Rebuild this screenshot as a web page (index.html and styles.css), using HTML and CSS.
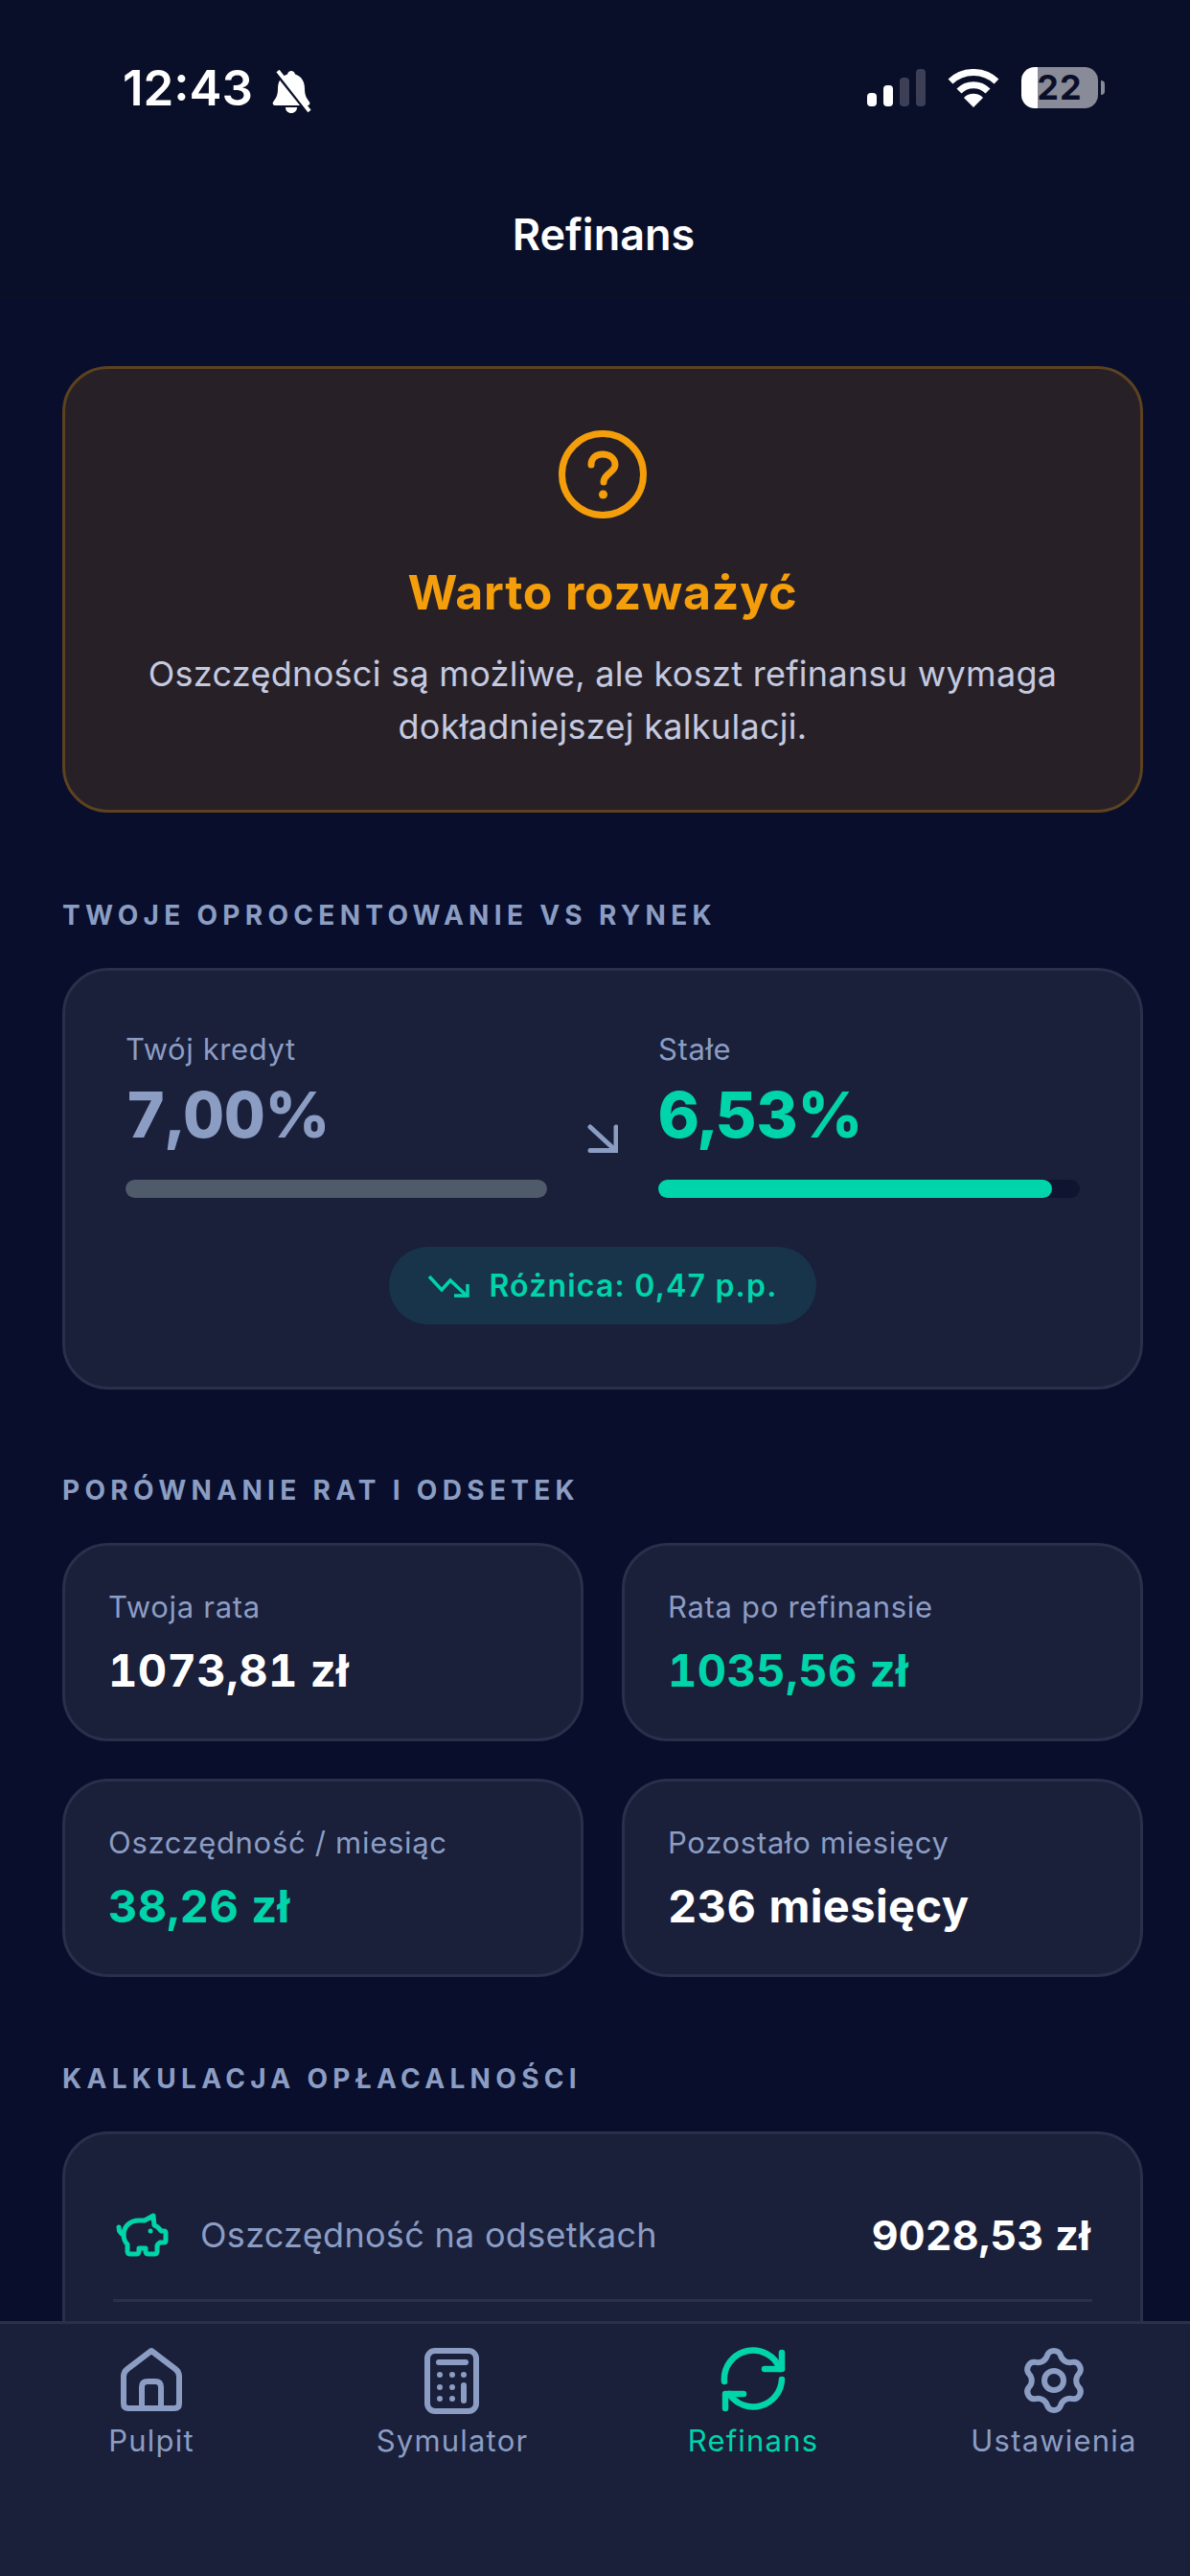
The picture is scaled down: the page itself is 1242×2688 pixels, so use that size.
FILE: index.html
```html
<!DOCTYPE html>
<html lang="pl">
<head>
    <meta charset="UTF-8">
    <meta name="viewport" content="width=device-width, initial-scale=1.0">
    <title>Refinans</title>
    <link rel="stylesheet" href="styles.css">
</head>
<body>
    <div class="app">
        <header class="top">
            <div class="status">
                <div class="status-left">
                    <span class="time">12:43</span>
                    <svg class="bell" width="46" height="46" viewBox="0 0 46 46">
                        <path class="bell-body" d="M23 1c2 0 3.500 1.500 4 3.500 7 2 10 8 10 15 0 7 2 10 5 14 1 1.500 0 3.500-2 3.500H6c-2 0-3-2-2-3.500 3-4 5-7 5-14 0-7 3-13 10-15C19.500 2.500 21 1 23 1zM17 39h12c0 3.500-2.500 6-6 6s-6-2.500-6-6z"/>
                        <path class="bell-gap" d="M5 0l36 45"/>
                        <path class="bell-slash" d="M9 1l33 42"/>
                    </svg>
                </div>
                <div class="status-right">
                    <div class="signal">
                        <span class="sig sig1"></span>
                        <span class="sig sig2"></span>
                        <span class="sig sig3 off"></span>
                        <span class="sig sig4 off"></span>
                    </div>
                    <svg class="wifi" width="54" height="40" viewBox="0 0 54 40">
                        <path d="M3 13A35 35 0 0 1 51 13" fill="none" stroke="#fff" stroke-width="7"/>
                        <path d="M12 23A21 21 0 0 1 42 23" fill="none" stroke="#fff" stroke-width="7"/>
                        <path d="M17 30A14 14 0 0 1 37 30L27 40z" fill="#fff"/>
                    </svg>
                    <div class="battery">22</div>
                </div>
            </div>
            <h1 class="title">Refinans</h1>
        </header>

        <main class="content">
            <section class="card verdict">
                <svg width="92" height="92" viewBox="0 0 92 92" fill="none" stroke="#f59e0b" stroke-width="7" stroke-linecap="round">
                    <circle cx="46" cy="46" r="42.500"/>
                    <path d="M34 36C34 29 39 25 46 25C53 25 59 29 59 36C59 44 47 45 47 54"/>
                    <circle cx="46.500" cy="67" r="4.500" fill="#f59e0b" stroke="none"/>
                </svg>
                <h2 class="verdict-title">Warto rozważyć</h2>
                <p class="verdict-text">Oszczędności są możliwe, ale koszt refinansu wymaga dokładniejszej kalkulacji.</p>
            </section>

            <h3 class="section-label">TWOJE OPROCENTOWANIE VS RYNEK</h3>
            <section class="card rates">
                <div class="rates-row">
                    <div class="rate">
                        <div class="rate-name">Twój kredyt</div>
                        <div class="rate-value">7,00%</div>
                        <div class="bar"><div class="bar-fill grey" style="width: 100%"></div></div>
                    </div>
                    <svg class="rate-arrow" width="32" height="30" viewBox="0 0 32 30" fill="none" stroke="#8b9dc3" stroke-width="5" stroke-linecap="round">
                        <path d="M3 3L29 27"/>
                        <path d="M30 3V27.500H3"/>
                    </svg>
                    <div class="rate">
                        <div class="rate-name">Stałe</div>
                        <div class="rate-value green">6,53%</div>
                        <div class="bar"><div class="bar-fill teal" style="width: 93.300%"></div></div>
                    </div>
                </div>
                <div class="diff">
                    <svg width="44" height="24" viewBox="0 0 44 24" fill="none" stroke="#00d4aa" stroke-width="3.500">
                        <path d="M2 2L15 16L24 6L41 22"/>
                        <path d="M42 10V22H28"/>
                    </svg>
                    <span>Różnica: 0,47 p.p.</span>
                </div>
            </section>

            <h3 class="section-label">PORÓWNANIE RAT I ODSETEK</h3>
            <section class="stats">
                <div class="card stat">
                    <div class="stat-name">Twoja rata</div>
                    <div class="stat-value">1073,81 zł</div>
                </div>
                <div class="card stat">
                    <div class="stat-name">Rata po refinansie</div>
                    <div class="stat-value green">1035,56 zł</div>
                </div>
                <div class="card stat">
                    <div class="stat-name">Oszczędność / miesiąc</div>
                    <div class="stat-value green">38,26 zł</div>
                </div>
                <div class="card stat">
                    <div class="stat-name">Pozostało miesięcy</div>
                    <div class="stat-value">236 miesięcy</div>
                </div>
            </section>

            <h3 class="section-label">KALKULACJA OPŁACALNOŚCI</h3>
            <section class="card calc">
                <div class="calc-row">
                    <svg class="pig" width="60" height="60" viewBox="0 0 60 60" fill="none" stroke="#00d4aa" stroke-width="5" stroke-linejoin="round" stroke-linecap="round">
                        <path d="M42 10L33 15H27C18 15 11 21 11 30C11 35 13 38 15 40V47Q15 50 18 50H24Q27 50 27 47V44H34V47Q34 50 37 50H43Q46 50 46 47V41Q47 39 49 38H53Q55 38 55 36V28Q55 26 53 26H50Q48 22 43 20Z"/>
                        <path d="M11 30Q6 28 6 22"/>
                        <circle cx="39" cy="26" r="2.500" fill="#00d4aa" stroke="none"/>
                    </svg>
                    <span class="calc-name">Oszczędność na odsetkach</span>
                    <span class="calc-value">9028,53 zł</span>
                </div>
            </section>
        </main>

        <nav class="tabs">
            <div class="tab">
                <svg width="72" height="72" viewBox="0 0 72 72" fill="none" stroke="#8b9dc3" stroke-width="6" stroke-linejoin="round" stroke-linecap="round">
                    <path d="M36 6L61 25Q65 28 65 33V61Q65 66 60 66H12Q7 66 7 61V33Q7 28 11 25Z"/>
                    <path d="M26 66V44Q26 38 32 38H40Q46 38 46 44V66"/>
                </svg>
                <span>Pulpit</span>
            </div>
            <div class="tab">
                <svg width="72" height="72" viewBox="0 0 72 72" fill="none" stroke="#8b9dc3" stroke-width="6" stroke-linecap="round">
                    <rect x="10" y="6" width="51" height="63" rx="8"/>
                    <path d="M22 18H50"/>
                    <path d="M48 42V58"/>
                    <g fill="#8b9dc3" stroke="none">
                        <circle cx="23" cy="31" r="3"/>
                        <circle cx="36" cy="31" r="3"/>
                        <circle cx="48" cy="31" r="3"/>
                        <circle cx="23" cy="44" r="3"/>
                        <circle cx="36" cy="44" r="3"/>
                        <circle cx="23" cy="56" r="3"/>
                        <circle cx="36" cy="56" r="3"/>
                    </g>
                </svg>
                <span>Symulator</span>
            </div>
            <div class="tab active">
                <svg width="72" height="72" viewBox="0 0 72 72" fill="none" stroke="#00d4aa" stroke-width="6.500" stroke-linecap="round" stroke-linejoin="round">
                    <path d="M6 38A30 30 0 0 1 64 25"/>
                    <path d="M66 8V25H48"/>
                    <path d="M66 36A30 30 0 0 1 11 51"/>
                    <path d="M7 66V51H26"/>
                </svg>
                <span>Refinans</span>
            </div>
            <div class="tab">
                <svg width="72" height="72" viewBox="-36 -37 72 72" fill="none" stroke="#8b9dc3" stroke-width="6" stroke-linejoin="round">
                    <path d="M-7 -26.100A7.500 7.500 0 0 1 7 -26.100A10 10 0 0 0 19.100 -19.100A7.500 7.500 0 0 1 26.100 -7A10 10 0 0 0 26.100 7A7.500 7.500 0 0 1 19.100 19.100A10 10 0 0 0 7 26.100A7.500 7.500 0 0 1 -7 26.100A10 10 0 0 0 -19.100 19.100A7.500 7.500 0 0 1 -26.100 7A10 10 0 0 0 -26.100 -7A7.500 7.500 0 0 1 -19.100 -19.100A10 10 0 0 0 -7 -26.100Z"/>
                    <circle cx="0" cy="0" r="10"/>
                </svg>
                <span>Ustawienia</span>
            </div>
        </nav>
    </div>
</body>
</html>
```

FILE: styles.css
```css
* {
    box-sizing: border-box;
}
body {
    font-family: Inter, "Noto Sans", sans-serif;
    background-color: #080e2b;
    color: #fff;
    margin: 0;
}
.app {
    width: 1242px;
    height: 2688px;
    display: flex;
    flex-direction: column;
    overflow: hidden;
}

/* status bar + title */
.top {
    background-color: #0a0f29;
    height: 311px;
    border-bottom: 3px solid #0b1026;
}
.status {
    height: 184px;
    padding: 62px 96px 0 128px;
    display: flex;
    justify-content: space-between;
    align-items: flex-start;
}
.status-left {
    display: flex;
    align-items: center;
    gap: 17px;
}
.time {
    font-size: 51px;
    line-height: 60px;
    font-weight: 600;
}
.bell {
    margin-top: 8px;
}
.bell-body {
    fill: #fff;
}
.bell-gap {
    stroke: #0a0f29;
    stroke-width: 4;
}
.bell-slash {
    stroke: #fff;
    stroke-width: 4;
}
.status-right {
    display: flex;
    align-items: center;
    gap: 23px;
    padding-top: 8px;
}
.signal {
    display: flex;
    align-items: flex-end;
    gap: 7px;
    height: 39px;
}
.sig {
    width: 10px;
    background: #fff;
    border-radius: 4px;
}
.sig1 {
    height: 14px;
}
.sig2 {
    height: 22px;
}
.sig3 {
    height: 30px;
}
.sig4 {
    height: 39px;
}
.sig.off {
    background: #3c3f55;
}
.battery {
    position: relative;
    width: 80px;
    height: 43px;
    border-radius: 14px;
    background: linear-gradient(90deg, #fff 21%, #8a8b98 21%);
    color: #0a0f29;
    font-size: 36px;
    line-height: 43px;
    font-weight: 700;
    text-align: center;
    letter-spacing: 1px;
}
.battery::after {
    content: "";
    position: absolute;
    right: -7px;
    top: 14px;
    width: 4px;
    height: 15px;
    border-radius: 0 4px 4px 0;
    background: #8a8b98;
}
.title {
    margin: 0;
    padding-left: 18px;
    font-size: 45px;
    line-height: 52px;
    font-weight: 600;
    text-align: center;
    margin-top: 35px;
}

.content {
    flex: 1;
    overflow: hidden;
    padding: 71px 49px 0 65px;
}
.card {
    background-color: #1a1f3a;
    border: 3px solid #2a2f4a;
    border-radius: 48px;
}

.verdict {
    height: 466px;
    background-color: #272127;
    border-color: #5c421f;
    padding-top: 64px;
    display: flex;
    flex-direction: column;
    align-items: center;
    text-align: center;
    margin-bottom: 89px;
}
.verdict-title {
    margin: 48px 0 0;
    font-size: 50px;
    line-height: 58px;
    font-weight: 700;
    color: #f59e0b;
    letter-spacing: 0.8px;
}
.verdict-text {
    margin: 29px 0 0;
    width: 1000px;
    font-size: 36px;
    line-height: 55px;
    color: #c5cae0;
    letter-spacing: 0.3px;
}

.section-label {
    margin: 87px 0 37px;
    font-size: 28px;
    line-height: 36px;
    font-weight: 700;
    letter-spacing: 5.300px;
    color: #8b9dc3;
}

.rates {
    height: 440px;
    padding: 63px 63px 0;
    display: flex;
    flex-direction: column;
    align-items: center;
}
.rates-row {
    width: 100%;
    display: flex;
    align-items: flex-end;
}
.rate {
    flex: 1;
}
.rate-arrow {
    margin: 0 42px 47px;
}
.rate-name {
    font-size: 31px;
    line-height: 38px;
    letter-spacing: 0.6px;
    color: #8b9dc3;
}
.rate-value {
    margin-top: 11px;
    font-size: 66px;
    line-height: 76px;
    font-weight: 800;
    font-variant-numeric: tabular-nums;
    color: #8b9dc3;
}
.green {
    color: #00d4aa;
}
.bar {
    margin-top: 30px;
    height: 19px;
    border-radius: 10px;
    background: #0f1430;
}
.bar-fill {
    height: 100%;
    border-radius: 10px;
}
.bar-fill.grey {
    background: #4f5a6b;
}
.bar-fill.teal {
    background: #00d4aa;
}
.diff {
    margin-top: 51px;
    height: 81px;
    padding: 0 40px;
    border-radius: 41px;
    background: #18344a;
    color: #00d4aa;
    font-size: 32px;
    font-weight: 600;
    letter-spacing: 1.200px;
    display: flex;
    align-items: center;
    gap: 20px;
}

.stats {
    display: grid;
    grid-template-columns: 544px 544px;
    gap: 39px 40px;
    margin-bottom: 88px;
}
.stat {
    height: 207px;
    padding: 45px 45px 0;
}
.stat-name {
    font-size: 31px;
    line-height: 38px;
    letter-spacing: 0.7px;
    color: #8b9dc3;
}
.stat-value {
    margin-top: 15px;
    font-size: 47px;
    line-height: 64px;
    font-weight: 700;
    font-variant-numeric: tabular-nums;
    letter-spacing: 0.4px;
}

.calc {
    height: 400px;
    padding: 0 50px;
}
.calc-row {
    height: 175px;
    border-bottom: 3px solid #2a2f4a;
    display: flex;
    align-items: center;
    padding-top: 37px;
}
.calc-name {
    margin-left: 31px;
    font-size: 36px;
    letter-spacing: 0.3px;
    color: #8b9dc3;
}
.calc-value {
    margin-left: auto;
    margin-right: 2px;
    font-size: 43px;
    font-weight: 700;
    font-variant-numeric: tabular-nums;
    letter-spacing: 0.2px;
}

/* bottom tabs */
.tabs {
    flex: none;
    height: 266px;
    background-color: #1a1f3a;
    border-top: 3px solid #2a2f4a;
    padding: 22px 0 0 1px;
    display: grid;
    grid-template-columns: repeat(4, 314px);
    align-items: start;
}
.tab {
    display: flex;
    flex-direction: column;
    align-items: center;
    color: #8b9dc3;
    font-size: 31px;
    line-height: 40px;
    letter-spacing: 1.200px;
}
.tab span {
    margin-top: 8px;
}
.tab.active {
    color: #00d4aa;
}
```
